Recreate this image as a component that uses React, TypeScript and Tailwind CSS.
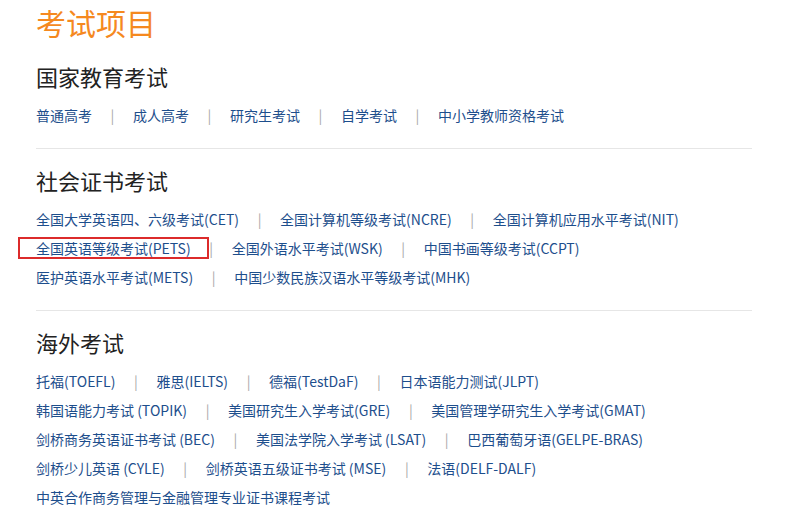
const sections: { title: string; rows: string[][] }[] = [
  {
    title: '国家教育考试',
    rows: [['普通高考', '成人高考', '研究生考试', '自学考试', '中小学教师资格考试']],
  },
  {
    title: '社会证书考试',
    rows: [
      ['全国大学英语四、六级考试(CET)', '全国计算机等级考试(NCRE)', '全国计算机应用水平考试(NIT)'],
      ['全国英语等级考试(PETS)', '全国外语水平考试(WSK)', '中国书画等级考试(CCPT)'],
      ['医护英语水平考试(METS)', '中国少数民族汉语水平等级考试(MHK)'],
    ],
  },
  {
    title: '海外考试',
    rows: [
      ['托福(TOEFL)', '雅思(IELTS)', '德福(TestDaF)', '日本语能力测试(JLPT)'],
      ['韩国语能力考试 (TOPIK)', '美国研究生入学考试(GRE)', '美国管理学研究生入学考试(GMAT)'],
      ['剑桥商务英语证书考试 (BEC)', '美国法学院入学考试 (LSAT)', '巴西葡萄牙语(GELPE-BRAS)'],
      ['剑桥少儿英语 (CYLE)', '剑桥英语五级证书考试 (MSE)', '法语(DELF-DALF)'],
      ['中英合作商务管理与金融管理专业证书课程考试'],
    ],
  },
];

function LinkRow({ items }: { items: string[] }) {
  return (
    <div className="flex items-center h-[29px] leading-[29px] text-[14px] whitespace-nowrap">
      {items.map((item, i) => (
        <span key={item} className="flex items-center">
          {i > 0 && <span className="inline-block w-[41px] text-center text-[#a8a8a8]">|</span>}
          <a href="#" className="relative text-[#1d4e8c]">
            {item}
            {item === '全国英语等级考试(PETS)' && (
              <span className="absolute -left-[18px] -right-[18px] top-[3px] bottom-[4px] border-2 border-[#dc2b2b] pointer-events-none" />
            )}
          </a>
        </span>
      ))}
    </div>
  );
}

export default function App() {
  return (
    <main
      className="min-h-screen bg-white px-[36px]"
      style={{ fontFamily: '"Noto Sans CJK SC", "Noto Sans", sans-serif' }}
    >
      <div className="w-[716px]">
        <h1 className="h-[44px] leading-[44px] text-[30px] font-normal text-[#f5891f]">考试项目</h1>

        {sections.map((section, idx) => (
          <section
            key={section.title}
            className={idx === 0 ? 'pt-[17px] pb-[18px]' : 'pt-[16px] pb-[18px] border-t border-[#e6e6e6]'}
          >
            <h2 className="h-[30px] leading-[30px] text-[22px] font-normal text-[#222]">{section.title}</h2>
            <div className="mt-[10px]">
              {section.rows.map((row, r) => (
                <LinkRow key={r} items={row} />
              ))}
            </div>
          </section>
        ))}
      </div>
    </main>
  );
}
